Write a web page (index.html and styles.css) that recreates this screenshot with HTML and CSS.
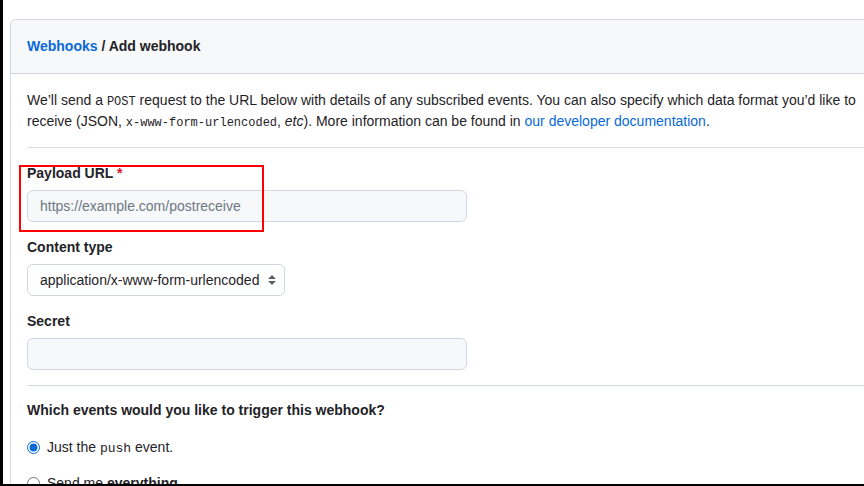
FILE: index.html
```html
<!DOCTYPE html>
<html lang="en">
<head>
<meta charset="utf-8">
<title>Add webhook</title>
<link rel="stylesheet" href="styles.css">
</head>
<body>
<div class="frame">
  <div class="page">
    <div class="card">
      <div class="card-header">
        <a class="crumb-link" href="#">Webhooks</a> / Add webhook
      </div>
      <div class="card-body">
        <p class="intro">We’ll send a <code>POST</code> request to the URL below with details of any subscribed events. You can also specify which data format you’d like to receive (JSON, <code>x-www-form-urlencoded</code>, <em>etc</em>). More information can be found in <a href="#">our developer documentation</a>.</p>
        <hr class="sep">
        <div class="form-group highlighted">
          <label class="field-label" for="url">Payload URL <span class="req">*</span></label>
          <input id="url" class="text-input" type="text" placeholder="https://example.com/postreceive">
          <span class="annot"></span>
        </div>
        <div class="form-group">
          <label class="field-label" for="ctype">Content type</label>
          <div class="select-wrap">
            <select id="ctype" class="select">
              <option>application/x-www-form-urlencoded</option>
            </select>
            <svg class="select-arrow" viewBox="0 0 16 16" width="16" height="16" aria-hidden="true"><path fill="#57606a" d="M4.427 9.427l3.396 3.396a.25.25 0 00.354 0l3.396-3.396A.25.25 0 0011.396 9H4.604a.25.25 0 00-.177.427zM4.427 6.573l3.396-3.396a.25.25 0 01.354 0l3.396 3.396A.25.25 0 0111.396 7H4.604a.25.25 0 01-.177-.427z"/></svg>
          </div>
        </div>
        <div class="form-group">
          <label class="field-label" for="secret">Secret</label>
          <input id="secret" class="text-input" type="text">
        </div>
        <hr class="sep sep-2">
        <p class="question">Which events would you like to trigger this webhook?</p>
        <label class="radio-row"><input type="radio" name="ev" checked> <span>Just the <code class="small">push</code> event.</span></label>
        <label class="radio-row"><input type="radio" name="ev"> <span>Send me <strong>everything</strong>.</span></label>
      </div>
    </div>
  </div>
</div>
</body>
</html>
```
FILE: styles.css
```css
* { box-sizing: border-box; }
html, body { margin: 0; padding: 0; }
body {
  font-family: "Liberation Sans", Arial, sans-serif;
  font-size: 14px;
  line-height: 21px;
  color: #1f2328;
}
.frame {
  height: 486px;
  background: #000;
  padding: 0 0 2px 3px;
  display: flex;
}
.page {
  flex: 1;
  background: #fff;
  overflow: hidden;
  padding: 19px 0 0 7px;
}
.card {
  width: 880px;
  border: 1px solid #d0d7de;
  border-radius: 6px;
}
.card-header {
  background: #f6f8fa;
  border-bottom: 1px solid #d0d7de;
  border-radius: 6px 6px 0 0;
  padding: 16px;
  font-weight: bold;
  line-height: 21px;
}
a { color: #0969da; text-decoration: none; }
.crumb-link { color: #0969da; }
.card-body { padding: 16px; }
.intro { margin: 0; }
code {
  font-family: "Liberation Mono", "DejaVu Sans Mono", monospace;
  font-size: 12px;
  line-height: 1;
}
.sep {
  border: 0;
  border-top: 1px solid #d8dee4;
  margin: 15px 0 15px;
  height: 0;
}
.sep-2 { margin: 15px 0 14px; }
.form-group { margin-bottom: 15px; position: relative; }
.field-label {
  display: block;
  font-weight: bold;
  margin-bottom: 6px;
}
.req { color: #cf222e; }
.text-input {
  display: block;
  width: 440px;
  height: 32px;
  padding: 5px 12px;
  font: inherit;
  font-size: 14px;
  color: #1f2328;
  background: #f6f8fa;
  border: 1px solid #d0d7de;
  border-radius: 6px;
  outline: none;
}
.text-input::placeholder { color: #6e7781; }
.select-wrap { position: relative; display: inline-block; }
.select {
  appearance: none;
  -webkit-appearance: none;
  height: 32px;
  padding: 5px 24px 5px 12px;
  font: inherit;
  font-size: 14px;
  color: #1f2328;
  background: #fff;
  border: 1px solid #d0d7de;
  border-radius: 6px;
  outline: none;
}
.select-arrow {
  position: absolute;
  right: 5px;
  top: 8px;
  pointer-events: none;
}
.annot {
  position: absolute;
  left: -8px;
  top: 2px;
  width: 245px;
  height: 67px;
  border: 2px solid #ff0000;
  pointer-events: none;
}
.question { margin: 0 0 16px; font-weight: bold; }
.radio-row {
  display: flex;
  align-items: center;
  gap: 7px;
  margin-bottom: 15px;
}
.radio-row input {
  margin: 0;
  width: 13px;
  height: 13px;
  accent-color: #0969da;
}
code.small { font-size: 13px; }
```
